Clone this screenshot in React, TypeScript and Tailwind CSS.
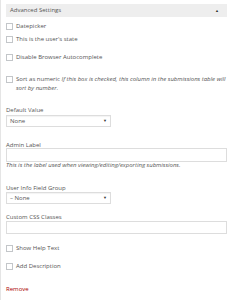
import React from 'react';

const font = { fontFamily: '"Open Sans", "Liberation Sans", sans-serif' };

function Check({ label, className = '' }: { label: string; className?: string }) {
  return (
    <label className={`flex h-[7px] items-center gap-[3px] ${className}`}>
      <span className="h-[7px] w-[7px] shrink-0 border border-[#c3c6c9] bg-white" />
      <span className="leading-[7px]">{label}</span>
    </label>
  );
}

function Select({ value }: { value: string }) {
  return (
    <div className="flex h-[12px] w-[105px] items-center justify-between border border-[#ddd] bg-white pl-[3px] pr-[3px] shadow-[inset_0_1px_1px_rgba(0,0,0,0.05)]">
      <span className="leading-[6px]">{value}</span>
      <span className="text-[4px] leading-[4px] text-[#333]">▼</span>
    </div>
  );
}

export default function App() {
  return (
    <div className="min-h-[300px] w-[231px] bg-white text-[6px] text-[#555]" style={font}>
      <div className="min-h-[300px] border-l border-[#e5e5e5] pl-[5px] pr-[4px] pt-[4px]">
        <div className="flex h-[13px] items-center justify-between bg-[#eee] pl-[4px] pr-[8px]">
          <span>Advanced Settings</span>
          <span className="text-[4px] text-[#333]">▲</span>
        </div>

        <Check label="Datepicker" className="mt-[6px]" />
        <Check label="This is the user's state" className="mt-[6px]" />
        <Check label="Disable Browser Autocomplete" className="mt-[11px]" />

        <label className="mt-[14px] flex items-start gap-[3px]">
          <span className="mt-[1px] h-[7px] w-[7px] shrink-0 border border-[#c3c6c9] bg-white" />
          <span className="leading-[9px]">
            Sort as numeric{' '}
            <i>If this box is checked, this column in the submissions table will sort by number.</i>
          </span>
        </label>

        <div className="mt-[14px] leading-[6px]">Default Value</div>
        <div className="mt-[2px]">
          <Select value="None" />
        </div>

        <div className="mt-[15px] leading-[6px]">Admin Label</div>
        <div className="h-[14px] border border-[#ddd] bg-white" />
        <div className="italic leading-[7px]">
          This is the label used when viewing/editing/exporting submissions.
        </div>

        <div className="mt-[16px] leading-[6px]">User Info Field Group</div>
        <div className="mt-[1px]">
          <Select value="– None" />
        </div>

        <div className="mt-[10px] leading-[6px]">Custom CSS Classes</div>
        <div className="mt-[1px] h-[13px] border border-[#ddd] bg-white" />

        <Check label="Show Help Text" className="mt-[11px]" />
        <Check label="Add Description" className="mt-[11px]" />

        <div className="mt-[15px] leading-[8px] text-[#a00]">Remove</div>
      </div>
    </div>
  );
}
